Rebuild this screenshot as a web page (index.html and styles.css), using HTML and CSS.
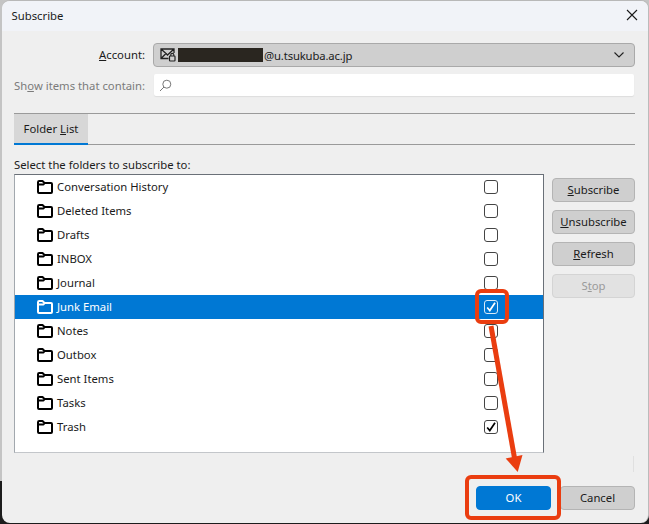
FILE: index.html
```html
<!DOCTYPE html>
<html lang="en">
<head>
<meta charset="utf-8">
<title>Subscribe</title>
<link rel="stylesheet" href="styles.css">
</head>
<body>
<svg width="0" height="0" class="defs"><defs>
<symbol id="folder" viewBox="0 0 16 14"><path d="M1 12V2.200C1 1.500 1.500 1 2.200 1H5.500L7.500 3H14C14.600 3 15 3.500 15 4V12C15 12.600 14.600 13 14 13H2C1.400 13 1 12.600 1 12ZM1 4.500H6.500L7.500 3" fill="none" stroke="currentColor" stroke-width="2" stroke-linejoin="round"/></symbol>
</defs></svg>
<main class="dialog">
  <header class="titlebar">
    <span class="title">Subscribe</span>
    <svg class="close" width="12" height="12" viewBox="0 0 12 12"><path d="M1 1L11 11M11 1L1 11" stroke="#1a1a1a" stroke-width="1.100"/></svg>
  </header>
  <div class="content">
    <div class="field account-row">
      <label class="field-label"><u>A</u>ccount:</label>
      <div class="select">
        <svg class="mail" width="16" height="14" viewBox="0 0 16 14"><path d="M8.500 10.500H1V1H14V5M1 1L6 5.500L1 10.500M6 5.500L7.500 7L14 1" fill="none" stroke="#222" stroke-width="1.300"/><rect x="9.500" y="8" width="5.500" height="5" rx=".7" fill="none" stroke="#222" stroke-width="1.200"/><path d="M10.800 8V6.500C10.800 5 13.800 5 13.800 6.500V8" fill="none" stroke="#222" stroke-width="1.100"/></svg>
        <span class="redact"></span><span class="domain">@u.tsukuba.ac.jp</span>
        <svg class="chev" width="10" height="6" viewBox="0 0 10 6"><path d="M.5.5L5 5L9.500.5" fill="none" stroke="#222" stroke-width="1.100"/></svg>
      </div>
    </div>
    <div class="field filter-row">
      <label class="field-label muted">Sh<u>o</u>w items that contain:</label>
      <div class="search">
        <svg width="13" height="13" viewBox="0 0 13 13"><circle cx="7.800" cy="5.200" r="4" fill="none" stroke="#777" stroke-width="1"/><path d="M5 8L1 12" stroke="#777" stroke-width="1"/></svg>
      </div>
    </div>
    <nav class="tabs"><span class="tab">Folder <u>L</u>ist</span></nav>
    <p class="list-label">Select the folders to subscribe to:</p>
    <div class="list-area">
      <ul class="folders">
        <li class="row"><svg class="ficon"><use href="#folder"/></svg><span class="name">Conversation History</span><span class="check"></span></li>
        <li class="row"><svg class="ficon"><use href="#folder"/></svg><span class="name">Deleted Items</span><span class="check"></span></li>
        <li class="row"><svg class="ficon"><use href="#folder"/></svg><span class="name">Drafts</span><span class="check"></span></li>
        <li class="row"><svg class="ficon"><use href="#folder"/></svg><span class="name">INBOX</span><span class="check"></span></li>
        <li class="row"><svg class="ficon"><use href="#folder"/></svg><span class="name">Journal</span><span class="check"></span></li>
        <li class="row selected"><svg class="ficon"><use href="#folder"/></svg><span class="name">Junk Email</span><span class="check"><svg width="12" height="12" viewBox="0 0 12 12"><path d="M2.200 6.500L4.800 9.500L10 1.800" fill="none" stroke="currentColor" stroke-width="1.700"/></svg></span></li>
        <li class="row"><svg class="ficon"><use href="#folder"/></svg><span class="name">Notes</span><span class="check"></span></li>
        <li class="row"><svg class="ficon"><use href="#folder"/></svg><span class="name">Outbox</span><span class="check"></span></li>
        <li class="row"><svg class="ficon"><use href="#folder"/></svg><span class="name">Sent Items</span><span class="check"></span></li>
        <li class="row"><svg class="ficon"><use href="#folder"/></svg><span class="name">Tasks</span><span class="check"></span></li>
        <li class="row"><svg class="ficon"><use href="#folder"/></svg><span class="name">Trash</span><span class="check"><svg width="12" height="12" viewBox="0 0 12 12"><path d="M2.200 6.500L4.800 9.500L10 1.800" fill="none" stroke="currentColor" stroke-width="1.700"/></svg></span></li>
      </ul>
      <div class="side">
        <button class="btn"><u>S</u>ubscribe</button>
        <button class="btn"><u>U</u>nsubscribe</button>
        <button class="btn"><u>R</u>efresh</button>
        <button class="btn disabled">S<u>t</u>op</button>
      </div>
    </div>
    <footer class="actions">
      <button class="btn primary">OK</button>
      <button class="btn">Cancel</button>
    </footer>
  </div>
</main>
<svg class="overlay" width="649" height="524" viewBox="0 0 649 524">
  <path d="M633.500 456V472" stroke="#e0e0e0" stroke-width="1"/>
  <rect x="477" y="291" width="30" height="31" rx="4" fill="none" stroke="#ea3d10" stroke-width="4"/>
  <path d="M491 326L514.500 458" fill="none" stroke="#ea3d10" stroke-width="5"/>
  <path d="M505.700 458.500L522.500 455L517.700 472Z" fill="#ea3d10"/>
  <rect x="467" y="477" width="92" height="41" rx="4" fill="none" stroke="#ea3d10" stroke-width="4"/>
</svg>
</body>
</html>
```
FILE: styles.css
```css
* { box-sizing: border-box; }
html, body { margin: 0; padding: 0; }
body {
  width: 649px;
  height: 524px;
  overflow: hidden;
  position: relative;
  padding: 0 0 1px 1.500px;
  background: linear-gradient(to bottom, #c4c4c4 0, #c4c4c4 481px, #1c1c1c 481px);
  font-family: "Noto Sans", "Open Sans", sans-serif;
  font-size: 11.300px;
  color: #1b1b1b;
}
.defs { position: absolute; }
.dialog {
  width: 647.500px;
  height: 523px;
  background: #efefef;
  border-radius: 8px;
  border-top: 1px solid #b8b8b8;
  border-right: 1px solid #bbb;
  overflow: hidden;
  display: flex;
  flex-direction: column;
}
.titlebar {
  height: 30px;
  flex: none;
  background: #f1f3f8;
  display: flex;
  align-items: center;
  justify-content: space-between;
  padding: 0 10px 1px 10px;
}
.close { margin-top: -1px; }
.content {
  flex: 1;
  padding: 12px 12.500px 0;
  display: flex;
  flex-direction: column;
}
.field { display: flex; align-items: center; }
.field-label { width: 131px; text-align: right; white-space: nowrap; margin-right: 8px; }
.account-row .field-label { padding-bottom: 1px; }
.muted { color: #7b7b7b; }
.account-row { height: 24px; }
.select {
  width: 482px;
  height: 24px;
  background: #cfcfcf;
  border: 1px solid #a9a9a9;
  border-radius: 4px;
  display: flex;
  align-items: center;
  padding: 0 10px 0 6px;
}
.mail { flex: none; margin-right: 2px; }
.redact { width: 85px; height: 14px; background: #2a2620; flex: none; }
.domain { flex: 1; margin-left: 1px; letter-spacing: -0.15px; }
.filter-row { height: 22px; margin-top: 7px; }
.search {
  width: 480px;
  margin-left: 1px;
  height: 22px;
  background: #fff;
  border-radius: 2px;
  box-shadow: 0 1px 1px #ddd;
  display: flex;
  align-items: center;
  padding-left: 5px;
}
.tabs {
  margin-top: 17px;
  width: 621px;
  height: 32px;
  border-top: 1px solid #9a9a9a;
  border-bottom: 1px solid #9a9a9a;
  display: flex;
}
.tab {
  width: 74px;
  background: #d7d7d7;
  border-bottom: 2px solid #0078d4;
  margin-bottom: -1px;
  display: flex;
  align-items: center;
  justify-content: center;
  white-space: pre;
}
.list-label { margin: 12px 0 0; height: 17px; line-height: 15px; }
.list-area { display: flex; align-items: flex-start; }
.folders {
  list-style: none;
  margin: 0;
  padding: 0;
  width: 530px;
  height: 279px;
  background: #fff;
  border-top: 1px solid #6a7078;
  border-left: 1px solid #a2a8ae;
  border-right: 1px solid #6a7078;
  border-bottom: 1px solid #c3c6ca;
}
.row { height: 24px; display: flex; align-items: center; padding-left: 22px; }
.ficon { width: 16px; height: 14px; color: #000; flex: none; }
.name { margin-left: 4px; margin-bottom: 2px; flex: 1; }
.check {
  width: 14px;
  height: 14px;
  border: 1px solid #444;
  border-radius: 3px;
  margin-right: 45px;
  display: flex;
  align-items: center;
  justify-content: center;
  color: #000;
}
.selected { background: #0078d4; color: #fff; }
.selected .ficon, .selected .check { color: #fff; }
.selected .check { border-color: #d8eaf8; }
.side { display: flex; flex-direction: column; gap: 8px; margin-left: 8px; padding-top: 4px; }
.btn {
  width: 83px;
  height: 24px;
  padding: 0 0 2px;
  background: #cfcfcf;
  border: 1px solid #b4b4b4;
  border-radius: 4px;
  font: inherit;
  color: #1b1b1b;
}
.disabled { background: #e2e2e2; border-color: #d4d4d4; color: #9a9a9a; }
.actions {
  display: flex;
  justify-content: flex-end;
  gap: 9px;
  margin-top: 33px;
  width: 621px;
}
.actions .btn { width: 75px; }
.primary { background: #0078d4; border-color: #0078d4; color: #fff; }
.overlay { position: absolute; left: 0; top: 0; pointer-events: none; }
```
